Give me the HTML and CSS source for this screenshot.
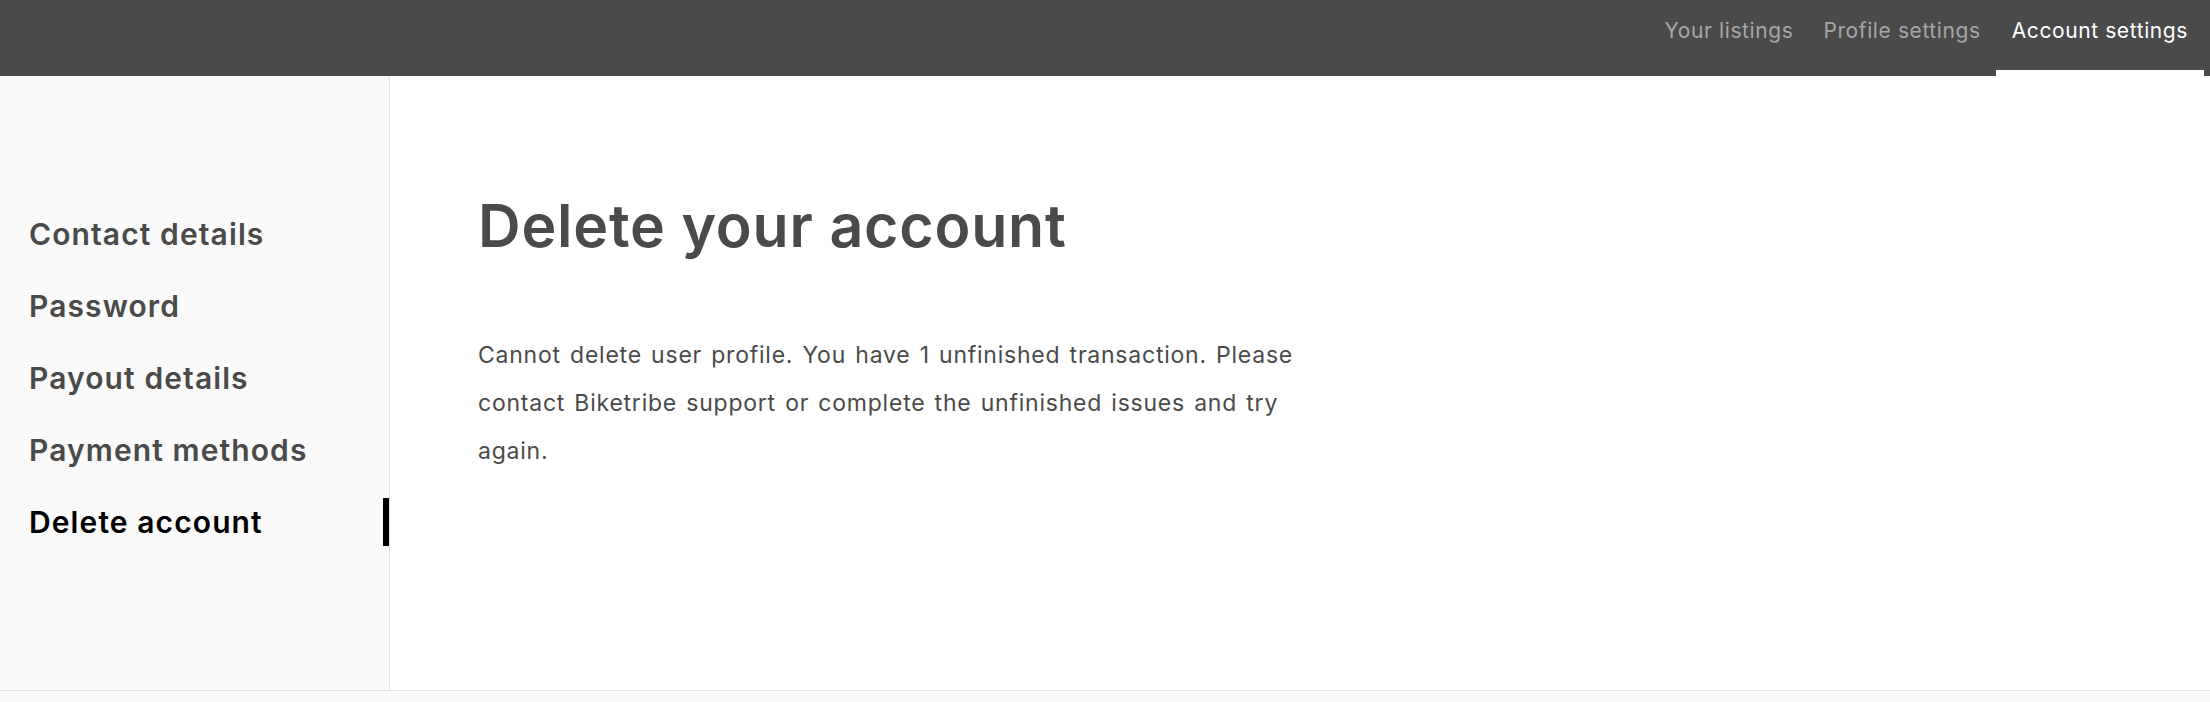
FILE: index.html
```html
<!DOCTYPE html>
<html lang="en">
<head>
<meta charset="utf-8">
<title>Account settings</title>
<link rel="stylesheet" href="styles.css">
</head>
<body>
<header class="topbar">
  <nav class="tabs">
    <a class="tab" href="#">Your listings</a>
    <a class="tab" href="#">Profile settings</a>
    <a class="tab tab-active" href="#">Account settings</a>
  </nav>
</header>
<div class="layout">
  <aside class="sidebar">
    <a class="side-item" href="#">Contact details</a>
    <a class="side-item" href="#">Password</a>
    <a class="side-item" href="#">Payout details</a>
    <a class="side-item" href="#">Payment methods</a>
    <a class="side-item side-active" href="#">Delete account</a>
  </aside>
  <main class="content">
    <h1 class="title">Delete your account</h1>
    <p class="message">Cannot delete user profile. You have 1 unfinished transaction. Please contact Biketribe support or complete the unfinished issues and try again.</p>
  </main>
</div>
<footer class="footer"></footer>
</body>
</html>
```

FILE: styles.css
```css
* { box-sizing: border-box; }

html, body {
  margin: 0;
  padding: 0;
  background: #fafafa;
}

body {
  font-family: Inter, "Open Sans", "Liberation Sans", sans-serif;
  color: #4a4a4a;
  height: 702px;
  overflow: hidden;
}

a { text-decoration: none; }

.topbar {
  height: 76px;
  background: #4a4a4a;
  display: flex;
  justify-content: flex-end;
  padding-right: 6px;
}

.tabs {
  display: flex;
  height: 100%;
}

.tab {
  height: 76px;
  padding: 16px 15px 0;
  border-bottom: 6px solid transparent;
  font-size: 21px;
  line-height: 30px;
  color: #a6a6a6;
  letter-spacing: 0.6px;
}

.tab-active {
  color: #ffffff;
  border-bottom-color: #ffffff;
  padding-left: 16px;
  padding-right: 16px;
}

.layout {
  display: flex;
  height: 615px;
  background: #ffffff;
  border-bottom: 1px solid #e2e2e2;
}

.sidebar {
  width: 390px;
  flex: none;
  background: #fafafa;
  border-right: 1px solid #e2e2e2;
  padding-top: 134px;
  display: flex;
  flex-direction: column;
  gap: 24px;
}

.side-item {
  display: block;
  height: 48px;
  line-height: 48px;
  padding-left: 29px;
  border-right: 6px solid transparent;
  font-size: 30px;
  font-weight: 600;
  color: #4a4a4a;
  letter-spacing: 1.1px;
}

.side-active {
  color: #000000;
  border-right-color: #000000;
}

.content {
  flex: 1;
  padding: 114px 0 0 88px;
}

.title {
  margin: 0;
  font-size: 59px;
  line-height: 71px;
  font-weight: 600;
  letter-spacing: 0.8px;
  color: #4a4a4a;
}

.message {
  margin: 70px 0 0;
  max-width: 840px;
  font-size: 23px;
  line-height: 48px;
  letter-spacing: 0.77px;
  word-spacing: 2px;
  color: #4a4a4a;
}

.footer {
  height: 10px;
  background: #fafafa;
}
```
